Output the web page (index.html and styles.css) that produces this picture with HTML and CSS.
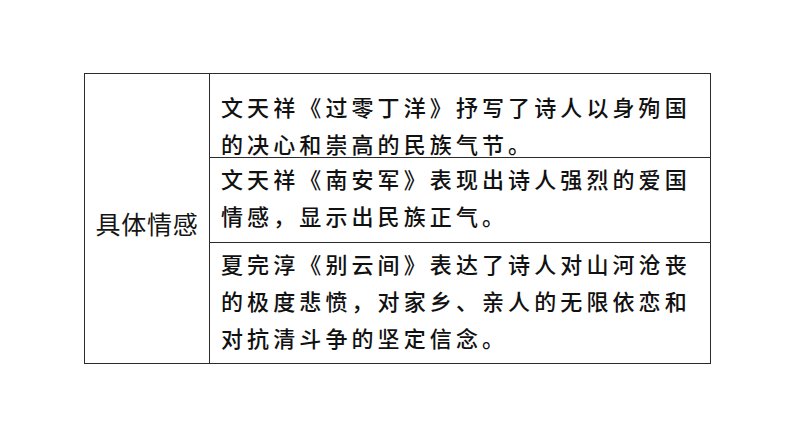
FILE: index.html
```html
<!DOCTYPE html>
<html lang="zh-CN">
<head>
<meta charset="utf-8">
<link rel="stylesheet" href="styles.css">
</head>
<body>
<table class="grid">
  <tr>
    <td class="label" rowspan="3"><div class="label-inner">具体情感</div></td>
    <td class="text"><div class="cell cell-1"><span class="line">文天祥《过零丁洋》抒写了诗人以身殉国</span><span class="line">的决心和崇高的民族气节。</span></div></td>
  </tr>
  <tr>
    <td class="text"><div class="cell cell-2"><span class="line">文天祥《南安军》表现出诗人强烈的爱国</span><span class="line">情感，显示出民族正气。</span></div></td>
  </tr>
  <tr>
    <td class="text"><div class="cell cell-3"><span class="line">夏完淳《别云间》表达了诗人对山河沧丧</span><span class="line">的极度悲愤，对家乡、亲人的无限依恋和</span><span class="line">对抗清斗争的坚定信念。</span></div></td>
  </tr>
</table>
</body>
</html>
```

FILE: styles.css
```css
html, body {
  margin: 0;
  padding: 0;
  background: #ffffff;
}

body {
  padding: 73px 0 0 84px;
  font-family: "Noto Sans CJK SC", "Noto Sans", sans-serif;
  color: #111111;
}

.grid {
  border-collapse: collapse;
  width: 627px;
  table-layout: fixed;
}

.grid td {
  border: 1.5px solid #2b2b2b;
  padding: 0;
}

.label {
  width: 124px;
  text-align: center;
  vertical-align: middle;
  font-size: 25px;
  letter-spacing: 0.8px;
  color: #141414;
}

.label-inner {
  padding-top: 9px;
}

.text {
  vertical-align: top;
  font-size: 22px;
  line-height: 37px;
  letter-spacing: 4.1px;
  font-weight: 500;
  white-space: nowrap;
}

.cell {
  box-sizing: border-box;
  padding-left: 11px;
  overflow: visible;
}

.cell-1 { height: 83px; padding-top: 14px; }
.cell-2 { height: 84px; padding-top: 2px; }
.cell-3 { height: 120px; padding-top: 2px; }

.line {
  display: block;
}
```
